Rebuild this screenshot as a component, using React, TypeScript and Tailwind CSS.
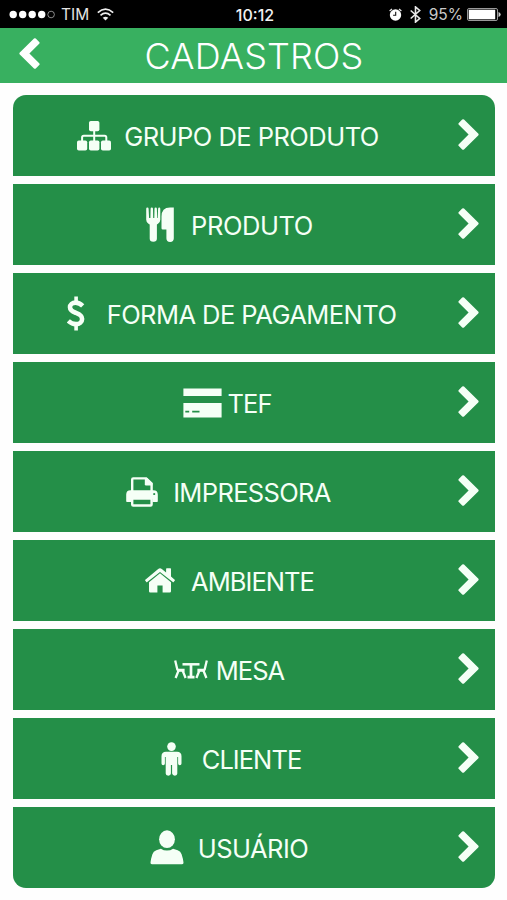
import type { ReactNode } from 'react';

interface MenuItem {
  label: string;
  icon: ReactNode;
  spacing: string;
  tracking: string;
}

const SitemapIcon = () => (
  <svg width="34" height="30" viewBox="0 0 34 30" fill="currentColor" className="shrink-0">
    <rect x="12" y="0" width="10.4" height="10.2" rx="1.8" />
    <rect x="0" y="19.4" width="10.2" height="10.2" rx="1.8" />
    <rect x="12" y="19.4" width="10.4" height="10.2" rx="1.8" />
    <rect x="24" y="19.4" width="10" height="10.2" rx="1.8" />
    <path d="M17.2 9v11M5.1 20v-3.600q0-1.600 1.600-1.600h21q1.600 0 1.600 1.600V20" fill="none" stroke="currentColor" strokeWidth="2" />
  </svg>
);

const CutleryIcon = () => (
  <svg width="29" height="35" viewBox="0 0 29 35" fill="currentColor" className="shrink-0">
    <path d="M.2 1.7q0-1.200 1.200-1.200t1.200 1.200l.5 9.200h1.300l.2-9.200q0-1.200 1.200-1.200t1.200 1.200l.2 9.200h1.100l.2-9.200q0-1.200 1.200-1.200t1.200 1.200l.2 9.200h.6l.4-9.200q.1-1.200 1.100-1.200t1.100 1.200v11q0 2.600-2.300 4l-1.100.8v14q0 3.300-3.600 3.300t-3.600-3.300V17.500l-1.200-.8Q.2 15.300.2 12.700Z" />
    <path d="M26.500.4h1.300v30.900q0 3.700-3.700 3.700t-3.700-3.700V22.600h-3.600q-1.300 0-1.300-1.300V9.500Q15.500.4 24 .4Z" />
  </svg>
);

const DollarIcon = () => (
  <svg width="18" height="35" viewBox="0 0 18 35" fill="none" stroke="currentColor" strokeWidth="4.600" className="shrink-0">
    <path d="M15.700 9.800C13.200 7.400 10.900 6.600 8.600 6.600 5.200 6.600 3 8.500 3 11.300c0 3.500 3.100 4.500 6 5.600 3.200 1.200 6.100 2.400 6.100 6 0 3.200-2.600 5.200-6.200 5.200-3 0-5.400-1.200-7.600-3.300" />
    <path d="M9.100.5V7M9.100 28v6.500" strokeWidth="3.600" />
  </svg>
);

const CardIcon = () => (
  <svg width="39" height="30" viewBox="0 0 39 30" fill="currentColor" className="shrink-0">
    <path d="M.4.4h38.200v7.600H.4ZM.4 15h38.200v14.500H.4Z" />
    <path d="M2.300 23.600h3.900M9.200 23.600h7.300" stroke="#248f48" strokeWidth="1.800" />
  </svg>
);

const PrintIcon = () => (
  <svg width="32" height="30" viewBox="0 0 32 30" fill="currentColor" className="shrink-0">
    <path d="M6.200 15V2.400q0-1 1-1h13l5.400 5.200V15" fill="none" stroke="currentColor" strokeWidth="2.400" />
    <path d="M18.800 1h2.200l5.400 5.400v2H20q-1.200 0-1.200-1.200Z" />
    <path fillRule="evenodd" d="M4.600 13.200h22.800q4.400 0 4.400 4.400v6.600q0 .8-.8.8h-4.600v-3.200H5.600V25H1q-.8 0-.8-.8v-6.600q0-4.400 4.400-4.400ZM28.200 15.900a1.100 1.100 0 1 0 .01 0Z" />
    <path d="M6.200 21.500v6q0 1 1 1h17.400q1 0 1-1v-6Z" fill="none" stroke="currentColor" strokeWidth="2.400" />
  </svg>
);

const HomeIcon = () => (
  <svg width="30" height="26" viewBox="0 0 30 26" fill="currentColor" className="shrink-0">
    <path d="M15 5.300 26 14.300v9q0 1.300-1.300 1.300H17.600V17.400h-5.200v7.200H5.300q-1.300 0-1.300-1.300v-9Z" />
    <path d="M13.200 1q1.800-1.400 3.600 0l4.300 3.500V.9q0-.6.600-.6h3.700q.6 0 .6.600v7.700l3.700 3.100q.5.400.1.900l-1.100 1.300q-.4.500-.9.100L15 3.900 2.200 14q-.5.400-.9-.1L.2 12.600q-.4-.5.1-.9Z" />
  </svg>
);

const TableIcon = () => (
  <svg width="34" height="19" viewBox="0 0 34 19" fill="none" stroke="currentColor" strokeWidth="2.300" className="shrink-0">
    <path d="M1.200.5 3.500 10.300M4.600 10.500 1.600 18M8.600 10.500 11.600 18" />
    <path d="M32.800.5 30.500 10.300M29.400 10.500l3 7.500M25.400 10.500 22.400 18" />
    <path d="M3 10.200h7.600M23.400 10.200H31" strokeWidth="3" />
    <path d="M8.500 4.300h17" strokeWidth="2.500" />
    <path d="M17 4.500V17M13.500 17.200h7" strokeWidth="2.700" />
  </svg>
);

const MaleIcon = () => (
  <svg width="21" height="34" viewBox="0 0 21 34" fill="currentColor" className="shrink-0">
    <circle cx="10.500" cy="4.600" r="4.300" />
    <path d="M5 9.700h11q4.500 0 4.500 4.500v7.300q0 1.800-1.700 1.800t-1.700-1.800v-6.600h-.8V31.600q0 2.100-2.400 2.100T11.100 31.600V23H9.900v8.600q0 2.100-2.600 2.100t-2.600-2.100V14.900h-.8v6.600q0 1.800-1.700 1.800T.5 21.500v-7.300q0-4.500 4.500-4.500Z" />
  </svg>
);

const PersonIcon = () => (
  <svg width="34" height="35" viewBox="0 0 34 35" fill="currentColor" className="shrink-0">
    <ellipse cx="17" cy="9.200" rx="7.900" ry="8.900" />
    <path d="M10.900 18.700q2.700 1.900 6.100 1.900t6.100-1.900l4.600 1.500q3 1 3.900 4 1.500 4.400 1.900 8.400.2 1.700-1.400 1.700H1.900q-1.600 0-1.400-1.700.4-4 1.900-8.400.9-3 3.900-4Z" />
  </svg>
);

const Chevron = ({ className = '' }: { className?: string }) => (
  <svg width="21" height="31" viewBox="0 0 21 31" fill="currentColor" className={`shrink-0 ${className}`}>
    <path d="m6 .6 14.200 14q.9.900 0 1.800L6 30.400q-.9.900-1.800 0L.8 27.100q-.9-.9 0-1.800l9.800-9.800L.8 5.700q-.9-.9 0-1.800L4.200.6q.9-.9 1.800 0Z" />
  </svg>
);

const items: MenuItem[] = [
  { label: 'GRUPO DE PRODUTO', icon: <SitemapIcon />, spacing: 'gap-[13px] pr-px', tracking: 'tracking-[-0.53px]' },
  { label: 'PRODUTO', icon: <CutleryIcon />, spacing: 'gap-[16px] pl-[2px]', tracking: 'tracking-[-0.4px]' },
  { label: 'FORMA DE PAGAMENTO', icon: <DollarIcon />, spacing: 'gap-[22px] pl-[6px]', tracking: 'tracking-[-0.55px]' },
  { label: 'TEF', icon: <CardIcon />, spacing: 'gap-[5px] pr-[2px]', tracking: 'tracking-[-0.9px]' },
  { label: 'IMPRESSORA', icon: <PrintIcon />, spacing: 'gap-[15px]', tracking: 'tracking-[-0.65px]' },
  { label: 'AMBIENTE', icon: <HomeIcon />, spacing: 'gap-[16px] pl-[2px]', tracking: 'tracking-[-0.95px]' },
  { label: 'MESA', icon: <TableIcon />, spacing: 'gap-[8px] pl-px', tracking: 'tracking-[-0.95px]' },
  { label: 'CLIENTE', icon: <MaleIcon />, spacing: 'gap-[20px] pl-[5px]', tracking: 'tracking-[-0.95px]' },
  { label: 'USUÁRIO', icon: <PersonIcon />, spacing: 'gap-[14px] pl-px', tracking: 'tracking-[-0.55px]' },
];

function StatusBar() {
  return (
    <div className="grid h-7 grid-cols-3 items-center bg-black pl-[9px] pr-[6px] pt-px text-[16px] text-[#e4e4e4]">
      <div className="flex items-center">
        <svg width="47" height="9" viewBox="0 0 47 9" fill="#fff">
          <circle cx="4.200" cy="4.500" r="3.700" />
          <circle cx="13.700" cy="4.500" r="3.700" />
          <circle cx="23.200" cy="4.500" r="3.700" />
          <circle cx="32.700" cy="4.500" r="3.700" />
          <circle cx="42.100" cy="4.500" r="3.300" fill="none" stroke="#aaa" strokeWidth="0.800" />
        </svg>
        <span className="ml-[5px] text-[15.500px]">TIM</span>
        <svg width="17" height="13" viewBox="0 0 17 13" fill="none" stroke="#eee" strokeWidth="1.700" className="ml-[8px]">
          <path d="M.8 4.600Q8.500-2.200 16.200 4.600M3.500 7.400q5-4.400 10 0" />
          <path d="M8.500 12.600 5.700 9.800q2.800-2.200 5.600 0Z" fill="#eee" stroke="none" />
        </svg>
      </div>
      <span className="text-center font-medium text-[#f1f1f1]">10:12</span>
      <div className="flex items-center justify-end">
        <svg width="13" height="13" viewBox="0 0 13 13" className="mr-[8px]">
          <circle cx="6.500" cy="7" r="5.700" fill="#fff" />
          <path d="M.6 3.100 3 .9M12.400 3.100 10 .9" stroke="#ddd" strokeWidth="1.300" />
          <path d="M6.700 3.800v3.500H4.100" fill="none" stroke="#111" strokeWidth="1.100" />
        </svg>
        <svg width="11" height="17" viewBox="0 0 11 17" fill="none" stroke="#e8e8e8" strokeWidth="1.600" className="mr-[8px]">
          <path d="m.7 4.500 9 8-4.200 3.600V.9l4.200 3.600-9 8" />
        </svg>
        <span className="mr-[4px] text-[15.500px] text-[#c9c9c9]">95%</span>
        <svg width="34" height="13" viewBox="0 0 34 13">
          <rect x=".5" y=".5" width="30" height="12" rx="1.500" fill="none" stroke="#999" />
          <rect x="1.700" y="1.700" width="26.500" height="9.600" fill="#fff" />
          <path d="M31.500 4q2.200.8 2.200 2.500T31.500 9Z" fill="#ccc" />
        </svg>
      </div>
    </div>
  );
}

export default function App() {
  return (
    <div className="flex h-[900px] w-[507px] flex-col overflow-hidden bg-[#fefefe] font-['Inter',sans-serif]">
      <StatusBar />
      <header className="grid h-[55px] shrink-0 grid-cols-[60px_1fr_60px] items-center bg-[#38b060] text-white">
        <button className="pl-[19px]">
          <Chevron className="-mt-1 rotate-180" />
        </button>
        <h1 className="whitespace-nowrap pl-px text-center text-[36px] font-light leading-none tracking-[0.15px]">CADASTROS</h1>
      </header>

      <nav className="mt-3 ml-[13px] flex w-[482px] flex-col gap-2 overflow-hidden rounded-[13px]">
        {items.map(item => (
          <button key={item.label} className="flex h-[81px] items-center bg-[#248f48] pr-4 text-[#f5fff6]">
            <span className={`flex flex-1 items-center justify-center ${item.spacing}`}>
              {item.icon}
              <span className={`whitespace-nowrap pt-[2px] text-[25.500px] font-normal leading-none ${item.tracking}`}>{item.label}</span>
            </span>
            <Chevron className="mb-[2px] ml-[14px]" />
          </button>
        ))}
      </nav>
    </div>
  );
}
